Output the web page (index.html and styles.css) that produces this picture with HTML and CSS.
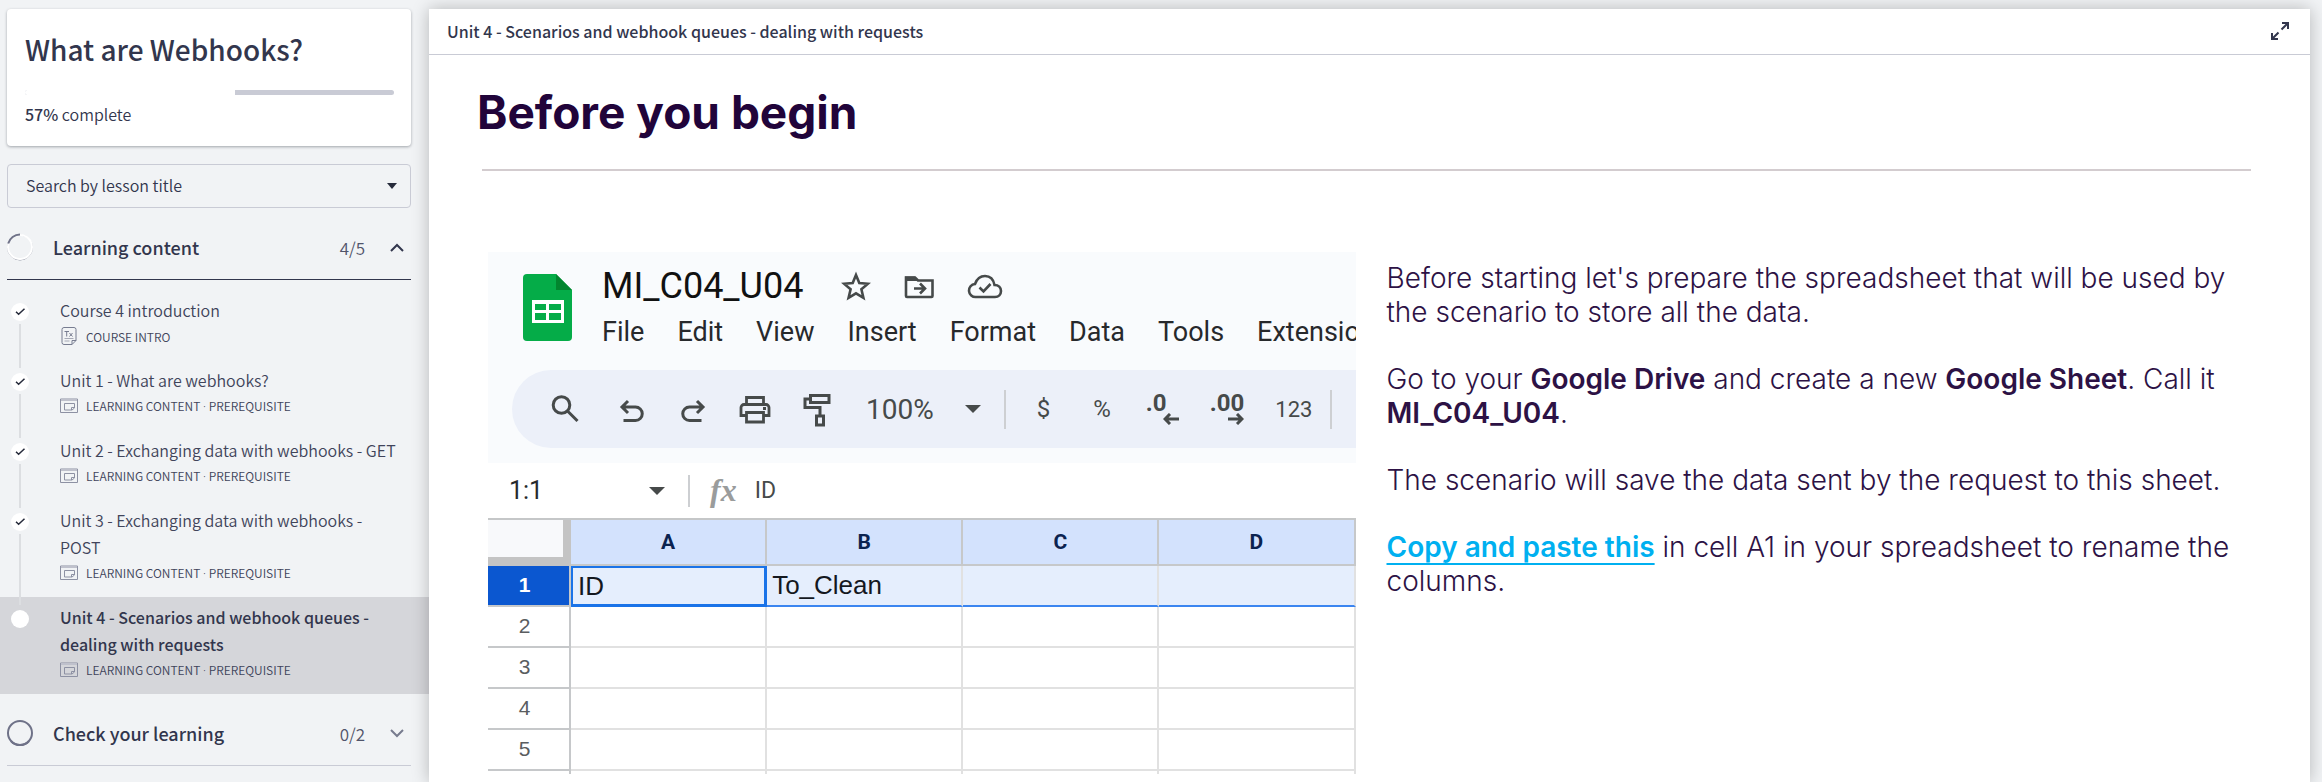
FILE: index.html
```html
<!DOCTYPE html>
<html lang="en">
<head>
<meta charset="utf-8">
<title>What are Webhooks?</title>
<link rel="stylesheet" href="styles.css">
</head>
<body>
<svg class="defs" aria-hidden="true">
  <symbol id="tick" viewBox="0 0 18 18"><path d="M5 8.800l2.600 2.500L13.500 5.700" fill="none" stroke="#262b3b" stroke-width="1.500"/></symbol>
  <symbol id="window" viewBox="0 0 18 16"><g fill="none" stroke="#8d91a3"><path d="M.5 1h17v13.500H.5z"/><path d="M1 2h16" stroke="#bfc1cc" stroke-width="2"/><path d="M4.500 5.500h10v4.500l-2.500 2h-7.500zM14.500 9.500h-3v2.500"/></g></symbol>
  <symbol id="caret" viewBox="0 0 16 8"><path d="M0 0h16L8 8z" fill="currentColor"/></symbol>
</svg>
<div class="app">
  <aside class="sidebar">
    <section class="card">
      <h1 class="course-title">What are Webhooks?</h1>
      <progress class="progress" value="57" max="100" aria-label="Course progress"></progress>
      <p class="complete"><strong>57%</strong> complete</p>
    </section>
    <div class="search">
      <select class="search-select" aria-label="Search by lesson title"><option>Search by lesson title</option></select>
      <svg class="search-caret" width="10" height="6" viewBox="0 0 10 6"><path d="M0 0h10L5 6z" fill="currentColor"/></svg>
    </div>
    <button class="section-head open" type="button" aria-expanded="true">
      <svg class="ring" width="28" height="28" viewBox="0 0 28 28" fill="none"><circle cx="14" cy="14.500" r="12.500" stroke="#8d90a0"/><circle cx="14" cy="14" r="12" stroke="#fff" stroke-width="2"/><path d="M2.200 10.500A12.500 12.500 0 0 1 14 1.500" stroke="#6f7288" stroke-width="2"/></svg>
      <span class="section-name">Learning content</span>
      <span class="section-count">4/5</span>
      <svg class="chevron" width="14" height="9" viewBox="0 0 14 9"><path d="M1 8l6-6 6 6" fill="none" stroke="#32364d" stroke-width="2"/></svg>
    </button>
    <ol class="lessons">
      <li class="lesson">
        <span class="marker"><svg class="dot" width="18" height="18"><use href="#tick"/></svg><span class="line"></span></span>
        <div class="lesson-body">
          <a class="lesson-title" href="#">Course 4 introduction</a>
          <p class="meta"><svg class="meta-icon" width="18" height="18" viewBox="0 0 18 18" fill="none" stroke="#777c90"><path d="M4 .5h10a2 2 0 0 1 2 2v11l-4 4H4a2 2 0 0 1-2-2v-13a2 2 0 0 1 2-2zM16 13.500h-4v4"/><path d="M4.500 11.500h9M4.500 14h5" stroke="#a6a9b6"/><path d="M4.500 4.500H9M6.700 4.500v5M9.500 6l3 3.500M12.500 6l-3 3.500"/></svg><span>COURSE INTRO</span></p>
        </div>
      </li>
      <li class="lesson">
        <span class="marker"><svg class="dot" width="18" height="18"><use href="#tick"/></svg><span class="line"></span></span>
        <div class="lesson-body">
          <a class="lesson-title" href="#">Unit 1 - What are webhooks?</a>
          <p class="meta"><svg class="meta-icon" width="18" height="16"><use href="#window"/></svg><span>LEARNING CONTENT <span class="sep">·</span> PREREQUISITE</span></p>
        </div>
      </li>
      <li class="lesson">
        <span class="marker"><svg class="dot" width="18" height="18"><use href="#tick"/></svg><span class="line"></span></span>
        <div class="lesson-body">
          <a class="lesson-title" href="#">Unit 2 - Exchanging data with webhooks - GET</a>
          <p class="meta"><svg class="meta-icon" width="18" height="16"><use href="#window"/></svg><span>LEARNING CONTENT <span class="sep">·</span> PREREQUISITE</span></p>
        </div>
      </li>
      <li class="lesson">
        <span class="marker"><svg class="dot" width="18" height="18"><use href="#tick"/></svg><span class="line"></span></span>
        <div class="lesson-body">
          <a class="lesson-title" href="#">Unit 3 - Exchanging data with webhooks - POST</a>
          <p class="meta"><svg class="meta-icon" width="18" height="16"><use href="#window"/></svg><span>LEARNING CONTENT <span class="sep">·</span> PREREQUISITE</span></p>
        </div>
      </li>
      <li class="lesson active">
        <span class="marker"><span class="dot"></span></span>
        <div class="lesson-body">
          <a class="lesson-title" href="#" aria-current="page">Unit 4 - Scenarios and webhook queues - dealing with requests</a>
          <p class="meta"><svg class="meta-icon" width="18" height="16"><use href="#window"/></svg><span>LEARNING CONTENT <span class="sep">·</span> PREREQUISITE</span></p>
        </div>
      </li>
    </ol>
    <button class="section-head" type="button" aria-expanded="false">
      <svg class="ring" width="28" height="28" viewBox="0 0 28 28" fill="none"><circle cx="14" cy="14" r="12" stroke="#6f7288" stroke-width="2"/><path d="M5 22a12 12 0 0 0 18 0" stroke="#6f7288" stroke-width="2"/></svg>
      <span class="section-name">Check your learning</span>
      <span class="section-count">0/2</span>
      <svg class="chevron" width="14" height="9" viewBox="0 0 14 9"><path d="M1 1l6 6 6-6" fill="none" stroke="#777b8e" stroke-width="2"/></svg>
    </button>
  </aside>

  <main class="viewer">
    <header class="viewer-head">
      <h2 class="viewer-title">Unit 4 - Scenarios and webhook queues - dealing with requests</h2>
      <button class="expand" type="button" aria-label="Full screen"><svg width="18" height="18" viewBox="0 0 18 18" fill="none" stroke="#32364d" stroke-width="2"><path d="M11 1h6v6M16.500 1.500l-6 6M7 17H1v-6M1.500 16.500l6-6"/></svg></button>
    </header>
    <article class="slide">
      <h2 class="slide-title">Before you begin</h2>
      <hr class="rule">
      <div class="columns">
        <section class="sheet" aria-label="Google Sheet">
          <div class="sheet-top">
            <div class="sheet-bar">
              <svg class="sheet-logo" width="49" height="67" viewBox="0 0 49 67"><path d="M4 0h29l16 16v47a4 4 0 0 1-4 4H4a4 4 0 0 1-4-4V4a4 4 0 0 1 4-4z" fill="#05ac48"/><path d="M33 0l16 16H33z" fill="#02852e"/><path fill-rule="evenodd" d="M9 26h32v23H9zM12 30v6h11v-6zM26 30v6h12v-6zM12 39v7h11v-7zM26 39v7h12v-7z" fill="#fff"/></svg>
              <div class="sheet-names">
                <div class="sheet-title">
                  <span class="sheet-name">MI_C04_U04</span>
                  <svg width="30" height="30" viewBox="0 0 30 30" fill="none" stroke="#464a4a" stroke-width="2.600"><path d="M15 4l3.300 8 8.700.7-6.600 5.600 2 8.500L15 22.300l-7.400 4.500 2-8.500L3 12.700l8.700-.7z"/></svg>
                  <svg width="32" height="30" viewBox="0 0 32 30" fill="none" stroke="#464a4a" stroke-width="2.600"><path d="M3 25V6.500h9l3 3h14.500V25a1 1 0 0 1-1 1H4a1 1 0 0 1-1-1z"/><path d="M2 5.500h10l4 4.500H2z" fill="#464a4a" stroke="none"/><path d="M11 17.500h10M17 12.500l5 5-5 5"/></svg>
                  <svg width="36" height="30" viewBox="0 0 36 30" fill="none" stroke="#464a4a" stroke-width="2.600"><path d="M9 26a6.500 6.500 0 0 1-1-13C10 7.500 14 5 18 5c5 0 8.500 3.500 9.500 9 4 0 6.500 2.500 6.500 6s-2.500 6-6 6z"/><path d="M12.500 16.500l4 4 7-7.500"/></svg>
                </div>
                <div class="sheet-menu"><span>File</span><span>Edit</span><span>View</span><span>Insert</span><span>Format</span><span>Data</span><span>Tools</span><span class="menu-cut">Extensions</span></div>
              </div>
            </div>
            <div class="toolbar">
              <svg class="search-tool" width="30" height="30" viewBox="0 0 30 30" fill="none" stroke="#464a4a" stroke-width="3"><circle cx="11.500" cy="11" r="8.300"/><path d="M17.500 17l10 10"/></svg>
              <svg width="30" height="30" viewBox="0 0 30 30" fill="none" stroke="#464a4a" stroke-width="3"><path d="M11 7l-6 6 6 6M5 13H18.500a6.500 6.500 0 0 1 0 13.500H6.500"/></svg>
              <svg width="30" height="30" viewBox="0 0 30 30" fill="none" stroke="#464a4a" stroke-width="3"><path d="M19 7l6 6-6 6M25 13H11.500a6.500 6.500 0 0 0 0 13.500h12"/></svg>
              <svg width="32" height="30" viewBox="0 0 32 30" fill="none" stroke="#464a4a" stroke-width="2.800"><path d="M7.500 9.500V3.500h17v6M7.500 21.500H2v-8a3 3 0 0 1 3-3h22a3 3 0 0 1 3 3v8h-5.500M7.500 18.500h17v9.500h-17z"/><path d="M24 14.500h3" stroke-width="3"/></svg>
              <svg width="30" height="36" viewBox="0 0 30 36" fill="none" stroke="#464a4a" stroke-width="3"><path d="M8.500 4.500H27v7H8.500zM8.500 8H3v8.500h15v7M14.500 25h7v9h-7z"/></svg>
              <span class="zoom">100%</span>
              <svg class="zoom-caret" width="16" height="8"><use href="#caret"/></svg>
              <span class="divider"></span>
              <span class="tool-text currency">$</span>
              <span class="tool-text percent">%</span>
              <span class="decimals"><b>.0</b><svg width="16" height="12" viewBox="0 0 16 12" fill="none" stroke="#464a4a" stroke-width="3"><path d="M16 6H2M7 1L2 6l5 5"/></svg></span>
              <span class="decimals"><b>.00</b><svg width="16" height="12" viewBox="0 0 16 12" fill="none" stroke="#464a4a" stroke-width="3"><path d="M0 6h14M9 1l5 5-5 5"/></svg></span>
              <span class="tool-text number">123</span>
              <span class="divider"></span>
            </div>
          </div>
          <div class="formula">
            <span class="range">1:1</span>
            <svg class="range-caret" width="16" height="8"><use href="#caret"/></svg>
            <span class="divider short"></span>
            <i class="fx">fx</i>
            <span class="formula-value">ID</span>
          </div>
          <table class="grid">
            <thead><tr><th class="corner"></th><th>A</th><th>B</th><th>C</th><th>D</th></tr></thead>
            <tbody>
              <tr class="picked"><th>1</th><td class="current">ID</td><td>To_Clean</td><td></td><td></td></tr>
              <tr><th>2</th><td></td><td></td><td></td><td></td></tr>
              <tr><th>3</th><td></td><td></td><td></td><td></td></tr>
              <tr><th>4</th><td></td><td></td><td></td><td></td></tr>
              <tr><th>5</th><td></td><td></td><td></td><td></td></tr>
              <tr class="cut"><th></th><td></td><td></td><td></td><td></td></tr>
            </tbody>
          </table>
        </section>
        <section class="copy">
          <p>Before starting let's prepare the spreadsheet that will be used by the scenario to store all the data.</p>
          <p>Go to your <strong>Google Drive</strong> and create a new <strong>Google Sheet</strong>. Call it <strong>MI_C04_U04</strong>.</p>
          <p>The scenario will save the data sent by the request to this sheet.</p>
          <p><a class="copy-link" href="#">Copy and paste this</a> in cell A1 in your spreadsheet to rename the columns.</p>
        </section>
      </div>
    </article>
  </main>
</div>
</body>
</html>
```
FILE: styles.css
```css
* { box-sizing: border-box; }
body {
  margin: 0;
  background: #f1f3f5;
  color: #32364d;
  font-family: "Noto Sans CJK SC", "Noto Sans", sans-serif;
  font-size: 16px;
}
h1, h2, p, ol { margin: 0; padding: 0; }
button { font: inherit; color: inherit; border: 0; background: none; padding: 0; }
a { color: inherit; text-decoration: none; }
svg { flex: none; display: block; }
.defs { position: absolute; width: 0; height: 0; }

.app {
  display: grid;
  grid-template-columns: 429px minmax(0, 1fr);
  padding: 9px 12px 0 0;
  height: 100vh;
  overflow: hidden;
}

/* Sidebar */
.card {
  margin: 0 18px 18px 7px;
  padding: 18px 17px 15px 18px;
  height: 137px;
  background: #fff;
  border-radius: 4px;
  box-shadow: 0 1px 3px rgba(40, 50, 60, .4);
}
.course-title { font-size: 28px; line-height: 44px; font-weight: 500; }
.progress {
  display: block;
  appearance: none;
  width: 100%;
  height: 5px;
  margin: 19px 0 7px;
  border: 0;
  border-radius: 3px;
  overflow: hidden;
  background: #c9cbd5;
}
.progress::-webkit-progress-bar { background: #c9cbd5; }
.progress::-webkit-progress-value { background: #fff; }
.complete { font-size: 16px; line-height: 24px; font-weight: 350; }
.complete strong { font-weight: 500; }

.search { position: relative; margin: 0 18px 0 7px; }
.search-select {
  appearance: none;
  display: block;
  width: 100%;
  height: 44px;
  padding: 0 18px 2px;
  border: 1px solid #c9cbd5;
  border-radius: 4px;
  background: transparent;
  color: #32364d;
  font: inherit;
  font-weight: 350;
}
.search-caret { position: absolute; right: 14px; top: 19px; color: #262b3b; pointer-events: none; }

.section-head {
  display: flex;
  align-items: center;
  width: 404px;
  height: 72px;
  margin-left: 7px;
  padding-top: 7px;
  border-bottom: 1px solid #c9cbd5;
  text-align: left;
}
.section-head.open { border-color: #32364d; }
.section-name { flex: 1; margin-left: 19px; font-size: 18px; font-weight: 500; }
.section-count { font-size: 17px; font-weight: 350; color: #50546a; }
.chevron { margin: 0 7px 0 25px; }
.ring { margin-left: -1px; }

.lessons { list-style: none; padding-top: 10px; }
.lesson { display: flex; padding: 7px 26px 12px 11px; }
.lesson.active { background: #d5d6da; }
.marker { display: flex; flex-direction: column; align-items: center; width: 18px; padding-top: 6px; }
.dot { width: 18px; height: 18px; border-radius: 50%; background: #fff; }
.line { position: relative; flex: 1; width: 2px; margin: 3px 0 -20px; background: #dcdee1; }
.lesson-body { flex: 1; margin-left: 31px; min-width: 0; }
.lesson-title { display: block; line-height: 27px; font-weight: 350; color: #40445a; }
.active .lesson-title { font-weight: 500; color: #32364d; }
.meta { display: flex; align-items: center; gap: 8px; height: 24px; font-size: 12px; font-weight: 350; color: #40445a; }
.sep { font-family: "Noto Sans", sans-serif; }

/* Viewer */
.viewer {
  background: #fff;
  box-shadow: 0 0 16px rgba(0, 0, 0, .25);
  min-height: calc(100vh - 9px);
}
.viewer-head {
  display: flex;
  align-items: center;
  justify-content: space-between;
  height: 46px;
  padding: 0 21px 2px 18px;
  border-bottom: 1px solid #c9cbd5;
}
.viewer-title { font-size: 16px; font-weight: 500; line-height: 24px; }

.slide { padding: 27px 48px 0 48px; font-family: Inter, "Liberation Sans", sans-serif; color: #2d1245; }
.slide-title { font-size: 46px; line-height: 60px; font-weight: 700; color: #21043a; }
.rule { margin: 27px 11px 0 5px; border: 0; height: 2px; background: #d3cccf; }
.columns {
  display: grid;
  grid-template-columns: minmax(0, 868fr) minmax(0, 876fr);
  gap: 31px;
  margin: 81px 0 0 11px;
}

.sheet { overflow: hidden; font-family: Roboto, "Liberation Sans", sans-serif; color: #27292c; }
.sheet-top { background: #f9fbfd; height: 211px; padding-top: 12px; }
.sheet-bar { display: flex; height: 106px; padding-left: 35px; }
.sheet-logo { margin-top: 10px; }
.sheet-names { flex: 1; min-width: 0; margin-left: 30px; }
.sheet-title { display: flex; align-items: center; height: 44px; gap: 32px; }
.sheet-name { margin-right: 6px; font-size: 36px; color: #111; }
.sheet-menu { display: flex; gap: 33px; font-size: 27px; line-height: 48px; }
.menu-cut { flex: 1; min-width: 0; overflow: hidden; }
.toolbar {
  display: flex;
  align-items: center;
  gap: 31px;
  width: 900px;
  height: 78px;
  margin-left: 24px;
  padding-left: 38px;
  border-radius: 39px;
  background: #ecf0f9;
  color: #464a4a;
}
.search-tool { margin-right: 6px; }
.zoom { margin-left: 3px; font-size: 28px; }
.divider { flex: none; width: 2px; height: 39px; background: #cdcfd2; margin-left: -8px; }
.tool-text { font-size: 24px; }
.currency { margin-right: 12px; }
.percent { margin-right: 4px; }
.number { margin-right: -5px; font-size: 22px; }
.decimals { display: flex; flex-direction: column; align-items: flex-start; min-width: 33px; font-size: 24px; line-height: 20px; }
.decimals svg { align-self: flex-end; }
.divider.short { height: 32px; margin: 0; }
.formula { display: flex; align-items: center; height: 55px; padding-left: 21px; font-size: 25px; }
.range { width: 140px; }
.range-caret { margin-right: 23px; color: #464a4a; }
.fx { margin: 0 18px 0 20px; font: italic 700 32px "Liberation Serif", serif; color: #9a9c9c; }
.formula-value { font-size: 23px; color: #464a4a; }

.grid { width: 100%; table-layout: fixed; border-collapse: separate; border-spacing: 0; border-top: 2px solid #c5c7c8; }
.grid th, .grid td { padding: 0; height: 41px; border-right: 2px solid #e1e1e1; border-bottom: 2px solid #e1e1e1; }
.grid thead th { height: 46px; background: #d3e2fd; border-color: #c6c8ca; color: #0b2350; font-size: 21px; font-weight: 700; }
.grid thead .corner { width: 83px; background: #f8f9fb; border-right: 8px solid #c4c4c4; border-bottom: 9px solid #c4c4c4; }
.grid tbody th { padding: 0 8px 2px 0; border-color: #c6c8ca; color: #5a5d60; font: 400 21px "Liberation Sans", sans-serif; }
.grid td { padding-left: 5px; font: 26px "Liberation Sans", sans-serif; color: #14181f; }
.grid .picked th { background: #0b57d0; color: #fff; font-weight: 700; }
.grid .picked td { background: #e5eefd; border-bottom-color: #3b85f0; }
.grid .picked .current { border: 2px solid #1a73e8; border-right-width: 3px; border-bottom-width: 3px; }
.grid .cut th, .grid .cut td { height: 3px; padding: 0; border-bottom: 0; }

.copy { padding-top: 9px; font-size: 28px; line-height: 34px; font-weight: 300; }
.copy p + p { margin-top: 33px; }
.copy strong, .copy-link { font-weight: 600; }
.copy-link { color: #00b0f0; text-decoration: underline 2px; text-underline-offset: 6px; text-decoration-skip-ink: none; }
```
